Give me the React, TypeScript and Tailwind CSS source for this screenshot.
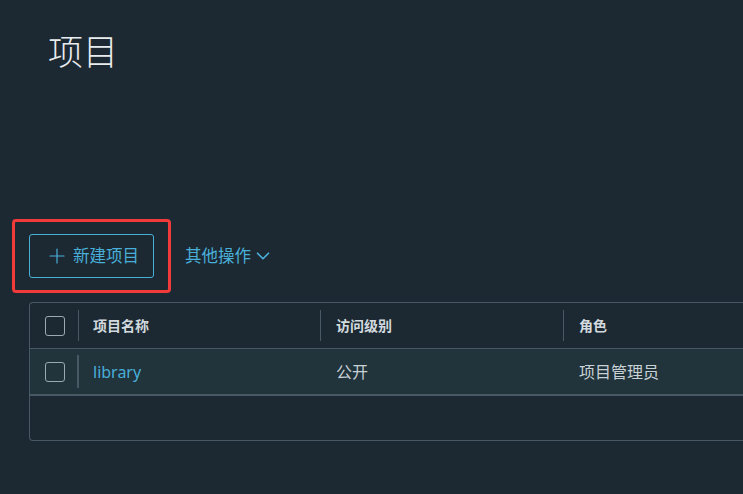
import { Plus, ChevronDown } from "lucide-react";

const font = { fontFamily: '"Noto Sans", "Noto Sans CJK SC", sans-serif' };

function Checkbox() {
  return <div className="w-5 h-5 rounded-[3px] border border-[#9aa9b3]" />;
}

export default function App() {
  return (
    <div className="w-[743px] h-[494px] overflow-hidden bg-[#1c2932] text-[#c8d1d6]" style={font}>
      <div className="pl-12 pt-[26px] h-[219px]">
        <h1 className="text-[35px] font-light text-[#e9ecee] leading-[52px]">项目</h1>
      </div>

      <div className="flex items-center pl-3">
        <div className="border-[3px] border-[#f13a3a] rounded-[4px] px-[14px] py-[12px]">
          <button className="h-[44px] w-[125px] flex items-center pl-[15px] gap-[4px] rounded-[3px] border border-[#49afd9] text-[#49afd9] text-[16.5px]">
            <Plus size={24} strokeWidth={1.2} />
            <span>新建项目</span>
          </button>
        </div>
        <button className="ml-[14px] flex items-center gap-[1px] text-[#49afd9] text-[16.5px]">
          <span>其他操作</span>
          <ChevronDown size={22} strokeWidth={1.8} />
        </button>
      </div>

      <div className="ml-[29px] mt-[9px] border border-r-0 border-[#485864] rounded-l-[4px] w-[720px]">
        <div className="flex h-[46px] items-center border-b border-[#485864] text-[14px] font-bold text-[#d2dadf]">
          <div className="w-[48px] flex items-center pl-[15px]">
            <Checkbox />
          </div>
          <div className="w-[242px] flex items-center">
            <div className="w-px h-[31px] bg-[#485864]" />
            <span className="pl-[14px]">项目名称</span>
          </div>
          <div className="w-[243px] flex items-center">
            <div className="w-px h-[31px] bg-[#485864]" />
            <span className="pl-[15px]">访问级别</span>
          </div>
          <div className="flex-1 flex items-center">
            <div className="w-px h-[31px] bg-[#485864]" />
            <span className="pl-[15px]">角色</span>
          </div>
        </div>
        <div className="flex h-[47px] items-center bg-[#21333b] border-b-2 border-[#485864] text-[16px] text-[#c8d1d6]">
          <div className="w-[47px] flex items-center pl-[15px]">
            <Checkbox />
          </div>
          <div className="w-[243px] flex items-center">
            <div className="w-[2px] h-[33px] bg-[#485864]" />
            <span className="pl-[14px] text-[#49afd9]">library</span>
          </div>
          <div className="w-[243px] pl-[16px]">公开</div>
          <div className="flex-1 pl-[16px]">项目管理员</div>
        </div>
        <div className="h-[44px]" />
      </div>
    </div>
  );
}
